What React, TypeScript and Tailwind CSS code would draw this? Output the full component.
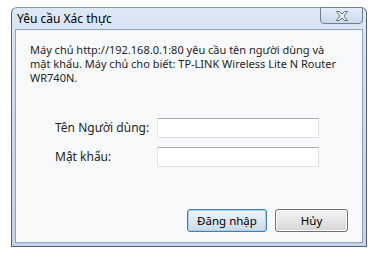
import React from 'react';

const font = { fontFamily: '"Noto Sans", "Open Sans", Arial, sans-serif' };

const CloseGlyph: React.FC = () => (
  <svg width="14" height="10" viewBox="0 0 14 10" className="block">
    <path
      d="M1.5 0.5 H4.5 L7 3 L9.5 0.5 H12.5 L9 5 L12.5 9.5 H9.5 L7 7 L4.5 9.5 H1.5 L5 5 Z"
      fill="#eef3fa"
      stroke="#5d6f88"
      strokeWidth="1"
      strokeLinejoin="round"
    />
  </svg>
);

const TextBox: React.FC = () => (
  <div className="w-[162px] h-[20px] bg-white border border-[#dfe3e9] border-t-[#abadb3]" />
);

const App: React.FC = () => {
  return (
    <div className="w-[375px] h-[256px] bg-white text-[12px] text-[#1e1e1e]" style={font}>
      <div className="pt-[7px] pl-[11px]">
        {/* khung cửa sổ */}
        <div className="w-[356px] h-[240px] rounded-t-[6px] border border-[#55647a] border-t-[#8293aa] bg-gradient-to-b from-[#dde8f5] via-[#c9d9ee] to-[#c3d4ea] flex flex-col">
          {/* thanh tiêu đề */}
          <div className="h-[21px] flex items-start justify-between pl-[5px] pr-[3px]">
            <span className="pt-[3px] leading-[15px] text-black">Yêu cầu Xác thực</span>
            <button className="w-[43px] h-[17px] -mt-px flex items-center justify-center rounded-b-[4px] border border-[#6f7f96] bg-gradient-to-b from-[#e4ecf6] to-[#cbd9eb]">
              <CloseGlyph />
            </button>
          </div>

          {/* vùng nội dung */}
          <div className="flex-1 mx-[3px] mb-[3px] border border-[#8fa3bd] bg-[#f8f9fb] flex flex-col">
            <p className="pl-[14px] pt-[13px] text-[11px] leading-[14px] whitespace-nowrap">
              Máy chủ http://192.168.0.1:80 yêu cầu tên người dùng và
              <br />
              mật khẩu. Máy chủ cho biết: TP-LINK Wireless Lite N Router
              <br />
              WR740N.
            </p>

            <div className="mt-[33px] pl-[39px] flex flex-col gap-[9px]">
              <div className="flex items-center">
                <span className="w-[102px]">Tên Người dùng:</span>
                <TextBox />
              </div>
              <div className="flex items-center">
                <span className="w-[102px]">Mật khẩu:</span>
                <TextBox />
              </div>
            </div>

            <div className="mt-auto mb-[10px] pr-[14px] flex justify-end gap-[8px]">
              <button className="w-[80px] h-[23px] rounded-[3px] border border-[#3c7fb1] bg-gradient-to-b from-[#eef5fa] via-[#dde9f2] to-[#c9d9e6] shadow-[inset_0_0_0_1px_#9fd3f2] text-black text-[11.5px]">
                Đăng nhập
              </button>
              <button className="w-[73px] h-[23px] rounded-[3px] border border-[#707070] bg-gradient-to-b from-[#f3f3f3] via-[#e6e6e6] to-[#d4d4d4] shadow-[inset_0_0_0_1px_#fbfbfb] text-black text-[11.5px]">
                Hủy
              </button>
            </div>
          </div>
        </div>
      </div>
    </div>
  );
};

export default App;
